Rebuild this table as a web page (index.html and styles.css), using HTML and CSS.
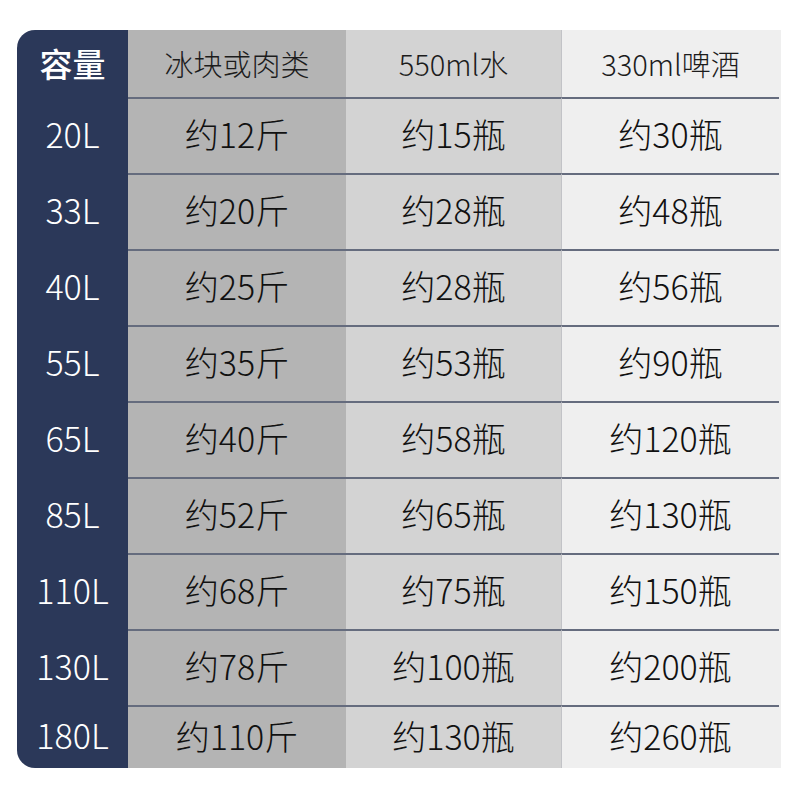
FILE: index.html
```html
<!DOCTYPE html>
<html lang="zh">
<head>
<meta charset="utf-8">
<link rel="stylesheet" href="styles.css">
</head>
<body>
<div class="table">
  <div class="cell c1 head">容量</div>
  <div class="cell c2 headtxt">冰块或肉类</div>
  <div class="cell c3 headtxt">550ml水</div>
  <div class="cell c4 headtxt">330ml啤酒</div>

  <div class="cell c1">20L</div>
  <div class="cell c2 ln">约12斤</div>
  <div class="cell c3 ln">约15瓶</div>
  <div class="cell c4 ln">约30瓶</div>

  <div class="cell c1">33L</div>
  <div class="cell c2 ln">约20斤</div>
  <div class="cell c3 ln">约28瓶</div>
  <div class="cell c4 ln">约48瓶</div>

  <div class="cell c1">40L</div>
  <div class="cell c2 ln">约25斤</div>
  <div class="cell c3 ln">约28瓶</div>
  <div class="cell c4 ln">约56瓶</div>

  <div class="cell c1">55L</div>
  <div class="cell c2 ln">约35斤</div>
  <div class="cell c3 ln">约53瓶</div>
  <div class="cell c4 ln">约90瓶</div>

  <div class="cell c1">65L</div>
  <div class="cell c2 ln">约40斤</div>
  <div class="cell c3 ln">约58瓶</div>
  <div class="cell c4 ln">约120瓶</div>

  <div class="cell c1">85L</div>
  <div class="cell c2 ln">约52斤</div>
  <div class="cell c3 ln">约65瓶</div>
  <div class="cell c4 ln">约130瓶</div>

  <div class="cell c1">110L</div>
  <div class="cell c2 ln">约68斤</div>
  <div class="cell c3 ln">约75瓶</div>
  <div class="cell c4 ln">约150瓶</div>

  <div class="cell c1">130L</div>
  <div class="cell c2 ln">约78斤</div>
  <div class="cell c3 ln">约100瓶</div>
  <div class="cell c4 ln">约200瓶</div>

  <div class="cell c1">180L</div>
  <div class="cell c2 ln">约110斤</div>
  <div class="cell c3 ln">约130瓶</div>
  <div class="cell c4 ln">约260瓶</div>
</div>
</body>
</html>
```

FILE: styles.css
```css
html, body {
  margin: 0;
  padding: 0;
  background: #ffffff;
}

body {
  font-family: "Noto Sans CJK SC", "Noto Sans", sans-serif;
}

.table {
  margin: 30px 0 0 17px;
  width: 764px;
  display: grid;
  grid-template-columns: 111px 218px 216px 219px;
  grid-template-rows: 67px repeat(8, 76px) 63px;
  border-radius: 18px 0 0 18px;
  overflow: hidden;
}

.cell {
  box-sizing: border-box;
  display: flex;
  align-items: center;
  justify-content: center;
  font-size: 34px;
  font-weight: 300;
  color: #111111;
  line-height: 1;
  white-space: nowrap;
  padding-bottom: 3px;
}

.c1 {
  background: #2b3859;
  color: #ffffff;
}

.c1.head {
  font-size: 33px;
  font-weight: 500;
  padding-bottom: 1px;
}

.c2 {
  background: #b4b4b4;
}

.c3 {
  background: #d3d3d3;
  border-right: 1px solid #c2c3c7;
}

.c4 {
  background: #efefef;
  padding-right: 2px;
}

.headtxt {
  font-size: 29px;
  color: #1c1c1c;
  padding-bottom: 1px;
}

.ln {
  border-top: 2px solid #656c7e;
  padding-bottom: 4px;
}

.c4.ln {
  border-top: none;
  padding-bottom: 2px;
  background-image: linear-gradient(#656c7e, #656c7e);
  background-size: calc(100% - 2px) 2px;
  background-repeat: no-repeat;
  background-position: 0 0;
}
```
